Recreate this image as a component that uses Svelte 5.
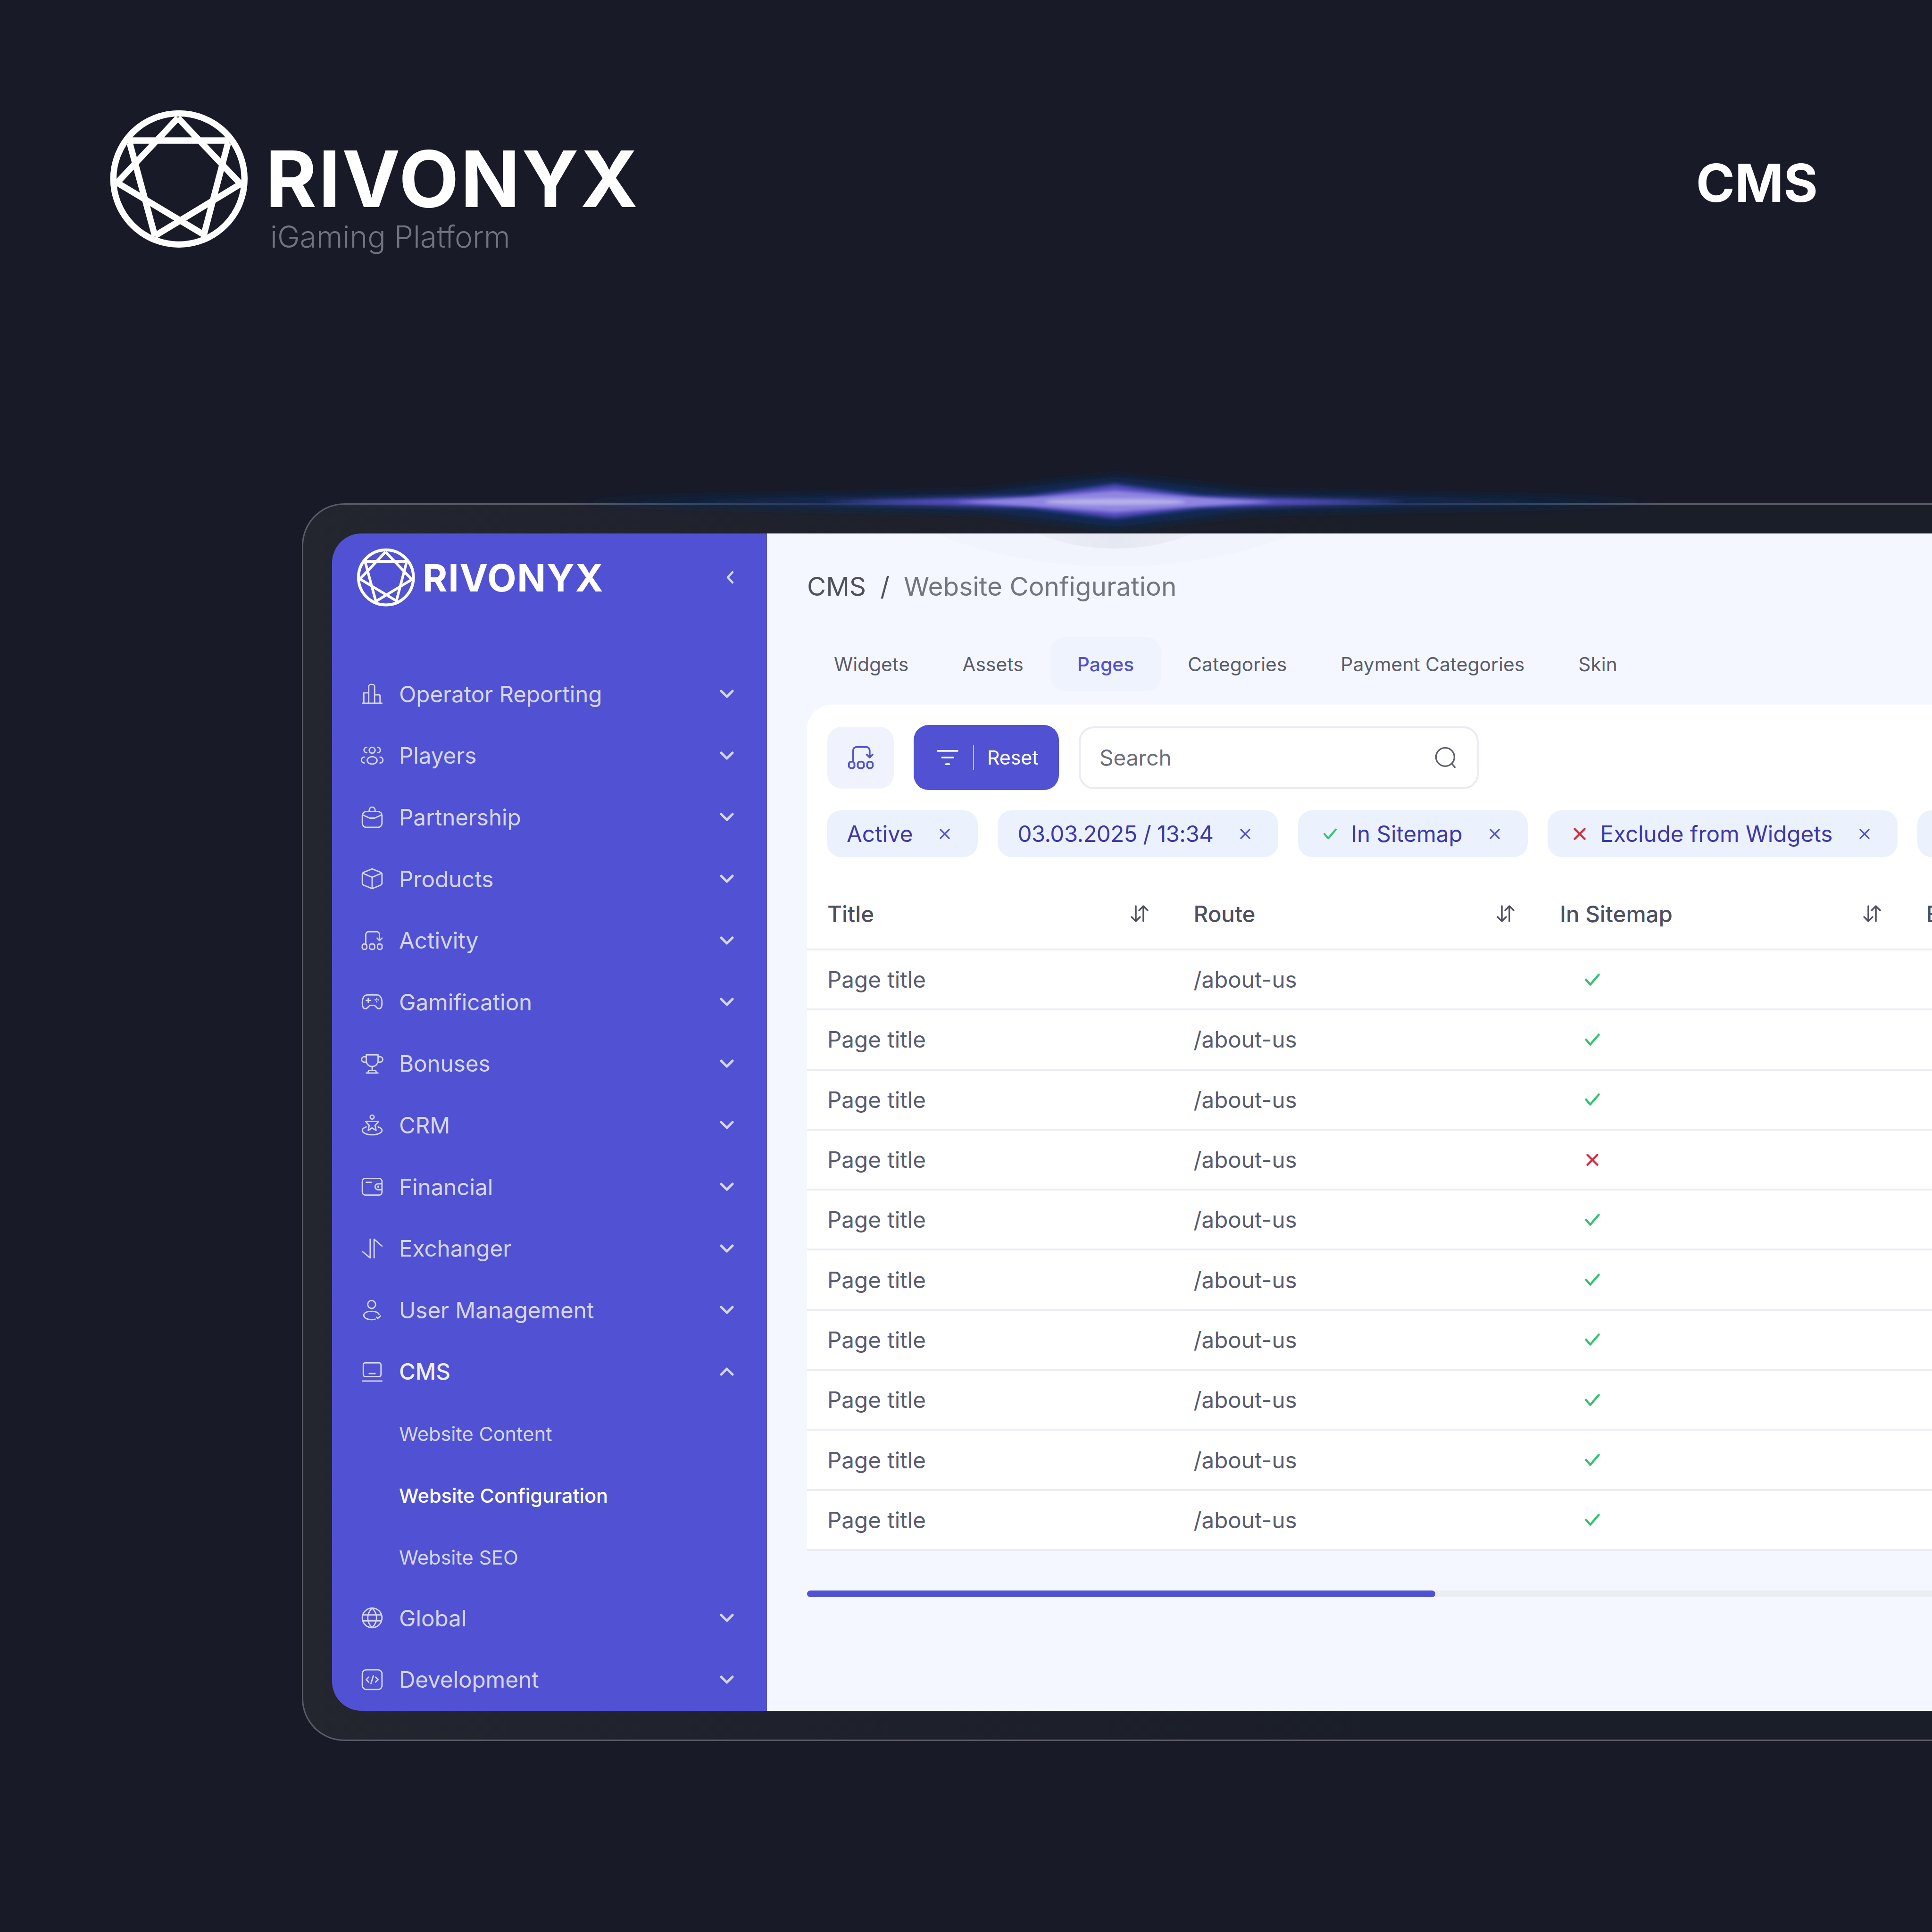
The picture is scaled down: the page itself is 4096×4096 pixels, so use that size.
<script>
  const gem = "M532 150 L145 562 L700 895 M532 150 L930 570 L385 900 M215 294 H860 M225 310 L385 900 M850 310 L695 900";

  const icons = {
    chart: "M2 21.5H22M3.5 21.5V11h5v10.5M8.5 21.5V4.5a2 2 0 0 1 2-2h2a2 2 0 0 1 2 2v17M14.5 13h4.5a1 1 0 0 1 1 1v7.5",
    players: "M12 3.5a3 3 0 1 1 0 6a3 3 0 1 1 0-6zM12 13a5 3.8 0 1 1 0 7.6a5 3.8 0 1 1 0-7.6zM6.5 3.5a2.8 2.8 0 0 0 0 5.6M17.5 3.5a2.8 2.8 0 0 1 0 5.6M4 13.5a3 3 0 0 0 0 6M20 13.5a3 3 0 0 1 0 6",
    bag: "M6 6.5h12a4 4 0 0 1 4 4v8a4 4 0 0 1-4 4H6a4 4 0 0 1-4-4v-8a4 4 0 0 1 4-4zM9 6.5V5a3 3 0 0 1 6 0v1.5M2.5 10l7 3.2h5l7-3.2",
    cube: "M12 2l8.5 3.4q1.5.6 1.5 2v9.2q0 1.4-1.500 2L12 22l-8.500-3.400q-1.500-.6-1.500-2V7.400q0-1.400 1.500-2zM2.500 6.500L12 10.500l9.500-4M12 10.500V22",
    activity: "M5.500 15V6a3 3 0 0 1 3-3h8a3 3 0 0 1 3 3v6M17 9.500l2.500 2.500 2.500-2.500M3.500 15.500h1a2 2 0 0 1 2 2.700a2 2 0 0 1-2 2.800h-1a2 2 0 0 1-1.500-2.800a2 2 0 0 1 1.500-2.700zM11.500 15.500h1a2 2 0 0 1 2 2.700a2 2 0 0 1-2 2.800h-1a2 2 0 0 1-2-2.800a2 2 0 0 1 2-2.700zM19.500 15.500h1a2 2 0 0 1 1.500 2.700a2 2 0 0 1-1.500 2.800h-1a2 2 0 0 1-2-2.800a2 2 0 0 1 2-2.700z",
    game: "M7 5h10c3 0 5 3 5 8 0 4-1 6-3 6-3 0-3-3.500-5.500-3.500h-3C8 15.500 8 19 5 19c-2 0-3-2-3-6 0-5 2-8 5-8zM6 10.500h4M8 8.500v4M15 10h.5M18 10h.5M16.500 8.500V9M16.500 11.500v.5",
    trophy: "M6 3h12v6a6 6 0 0 1-12 0zM6 5H4a2.200 2.200 0 0 0 0 5.500h2.500M18 5h2a2.200 2.200 0 0 1 0 5.500h-2.500M12 15v4M8.500 19h7l1 2.500h-9zM6 21.500h12",
    crm: "M12 2a2 2 0 1 1 0 4a2 2 0 1 1 0-4zM5.500 8.500h13l-3.500 4 1 5-4-2.500-4 2.500 1-5zM6 14c-2.500.8-4 2-4 3.500C2 20 6.500 22 12 22s10-2 10-4.500c0-1.500-1.500-2.700-4-3.500",
    wallet: "M5 3.500h14a3 3 0 0 1 3 3v11a3 3 0 0 1-3 3H5a3 3 0 0 1-3-3v-11a3 3 0 0 1 3-3zM6 7.500h5M22 9h-4a3 3 0 0 0 0 6h4M18 11.500h.5v1H18z",
    swap: "M10 2.500V21.500L2 15M14 21.500V2.500L22 9.500",
    user: "M11.500 2.500a4 4 0 1 1 0 8a4 4 0 1 1 0-8zM15 21.500c-1 .3-2.200.5-3.500.5C7 22 3.500 20.200 3.500 17.500S7 13.500 11.500 13.500c3.500 0 6.500 1.200 7.500 3M16.500 19.500l1.200 1.200 2.800-2.500",
    laptop: "M5 3h14a2 2 0 0 1 2 2v10a2 2 0 0 1-2 2H5a2 2 0 0 1-2-2V5a2 2 0 0 1 2-2zM2 21.500H22M9 14h6",
    globe: "M12 2a10 10 0 1 1 0 20a10 10 0 1 1 0-20zM12 2c-6 6-6 14 0 20M12 2c6 6 6 14 0 20M2.500 9h19M2.500 15h19",
    code: "M6 2h12a4 4 0 0 1 4 4v12a4 4 0 0 1-4 4H6a4 4 0 0 1-4-4V6a4 4 0 0 1 4-4zM8.500 9.500L6 12l2.500 2.500M15.500 9.500L18 12l-2.500 2.500M13.200 8l-2.400 8"
  };

  const menu = [
    { name: "Operator Reporting", icon: "chart" },
    { name: "Players", icon: "players" },
    { name: "Partnership", icon: "bag" },
    { name: "Products", icon: "cube" },
    { name: "Activity", icon: "activity" },
    { name: "Gamification", icon: "game" },
    { name: "Bonuses", icon: "trophy" },
    { name: "CRM", icon: "crm" },
    { name: "Financial", icon: "wallet" },
    { name: "Exchanger", icon: "swap" },
    { name: "User Management", icon: "user" },
    { name: "CMS", icon: "laptop", open: true, subs: ["Website Content", "Website Configuration", "Website SEO"] },
    { name: "Global", icon: "globe" },
    { name: "Development", icon: "code" }
  ];

  const tabs = ["Widgets", "Assets", "Pages", "Categories", "Payment Categories", "Skin"];
  const columns = ["Title", "Route", "In Sitemap", "Exclude from Widgets"];
  const sitemap = [true, true, true, false, true, true, true, true, true, true];
</script>

<div class="page">
  <header class="top">
    <div class="brand">
      <svg class="gem" viewBox="0 0 1080 1080" fill="none" stroke="#fff">
        <circle cx="538" cy="538" r="417" stroke-width="40" />
        <path d={gem} stroke-width="40" />
      </svg>
      <div class="brand-text">
        <div class="wordmark">RIVONYX</div>
        <div class="tagline">iGaming Platform</div>
      </div>
    </div>
    <div class="section-name">CMS</div>
  </header>

  <section class="frame">
    <svg class="glow" viewBox="0 0 2600 160" fill="none">
      <defs>
        <filter id="b1" x="-20%" y="-100%" width="140%" height="300%"><feGaussianBlur stdDeviation="10" /></filter>
        <filter id="b2" x="-20%" y="-100%" width="140%" height="300%"><feGaussianBlur stdDeviation="5" /></filter>
        <filter id="b3" x="-20%" y="-100%" width="140%" height="300%"><feGaussianBlur stdDeviation="3" /></filter>
      </defs>
      <polygon points="145,80 1000,62 1300,27 1600,62 2455,80 1600,98 1300,133 1000,98" fill="#10295a" filter="url(#b1)" />
      <polygon points="680,80 1120,68 1300,43 1480,68 1920,80 1480,92 1300,114 1120,92" fill="#5a4fc4" filter="url(#b2)" />
      <polygon points="960,80 1150,69 1300,56 1450,69 1640,80 1450,91 1300,102 1150,91" fill="#8f85e0" filter="url(#b3)" />
      <ellipse cx="1300" cy="80" rx="150" ry="7" fill="#b5b0ea" filter="url(#b3)" />
    </svg>

    <div class="app">
      <aside class="side">
        <div class="side-head">
          <svg class="side-gem" viewBox="0 0 1080 1080" fill="none" stroke="#fff">
            <circle cx="538" cy="538" r="417" stroke-width="44" />
            <path d={gem} stroke-width="40" />
          </svg>
          <span class="side-word">RIVONYX</span>
          <svg class="collapse" viewBox="0 0 20 30" fill="none" stroke="#d9d9ee" stroke-width="4.500" stroke-linecap="round" stroke-linejoin="round"><path d="M15 4L5 15l10 11" /></svg>
        </div>
        <nav class="nav">
          {#each menu as item}
            <div class="item" class:open={item.open}>
              <svg class="ico" viewBox="0 0 24 24" fill="none" stroke="currentColor" stroke-width="1.350" stroke-linecap="round" stroke-linejoin="round"><path d={icons[item.icon]} /></svg>
              <span class="label">{item.name}</span>
              <svg class="chev" viewBox="0 0 30 20" fill="none" stroke="currentColor" stroke-width="5" stroke-linecap="round" stroke-linejoin="round">
                <path d={item.open ? "M3 16L15 4l12 12" : "M3 4l12 12L27 4"} />
              </svg>
            </div>
            {#if item.subs}
              {#each item.subs as sub}
                <div class="sub" class:current={sub === "Website Configuration"}>{sub}</div>
              {/each}
            {/if}
          {/each}
        </nav>
      </aside>

      <main class="main">
        <div class="halo outer"></div>
        <div class="halo inner"></div>

        <div class="crumbs"><span class="crumb-root">CMS</span><span class="crumb-sep">/</span><span class="crumb-leaf">Website Configuration</span></div>

        <div class="tabs">
          {#each tabs as tab}
            <div class="tab" class:active={tab === "Pages"}>{tab}</div>
          {/each}
        </div>

        <div class="card">
          <div class="toolbar">
            <button class="square">
              <svg viewBox="0 0 24 24" fill="none" stroke="#5052d3" stroke-width="1.500" stroke-linecap="round" stroke-linejoin="round"><path d={icons.activity} /></svg>
            </button>
            <button class="reset">
              <svg viewBox="0 0 24 24" fill="none" stroke="#fff" stroke-width="1.600" stroke-linecap="round"><path d="M3 6h18M7 12h10M10.500 18h3" /></svg>
              <span class="reset-text">Reset</span>
            </button>
            <div class="search">
              <span>Search</span>
              <svg viewBox="0 0 24 24" fill="none" stroke="#5b5d6b" stroke-width="1.500" stroke-linecap="round"><path d="M11.500 2.500a9 9 0 1 1 0 18a9 9 0 1 1 0-18zM18 18l3 3.500" /></svg>
            </div>
          </div>

          <div class="chips">
            <div class="chip">Active<svg class="x" viewBox="0 0 20 20"><path d="M3 3l14 14M17 3L3 17" /></svg></div>
            <div class="chip date">03.03.2025 / 13:34<svg class="x" viewBox="0 0 20 20"><path d="M3 3l14 14M17 3L3 17" /></svg></div>
            <div class="chip lead"><svg class="mark ok" viewBox="0 0 24 20"><path d="M3 10l6 7L21 3" /></svg>In Sitemap<svg class="x" viewBox="0 0 20 20"><path d="M3 3l14 14M17 3L3 17" /></svg></div>
            <div class="chip lead"><svg class="mark no" viewBox="0 0 20 20"><path d="M3 3l14 14M17 3L3 17" /></svg>Exclude from Widgets<svg class="x" viewBox="0 0 20 20"><path d="M3 3l14 14M17 3L3 17" /></svg></div>
            <div class="chip"></div>
          </div>

          <div class="thead">
            {#each columns as col}
              <div class="th">
                <span>{col}</span>
                <svg class="sort" viewBox="0 0 44 40" fill="none" stroke="#4e5060" stroke-width="3.500" stroke-linecap="round" stroke-linejoin="round"><path d="M14 4V36M5 27L14 36L23 27M30 36V4M21 13L30 4L39 13" /></svg>
              </div>
            {/each}
          </div>

          {#each sitemap as yes}
            <div class="tr">
              <div class="td">Page title</div>
              <div class="td">/about-us</div>
              <div class="td">
                {#if yes}
                  <svg class="state ok" viewBox="0 0 24 20"><path d="M3 10l6 7L21 3" /></svg>
                {:else}
                  <svg class="state no" viewBox="0 0 20 20"><path d="M3 3l14 14M17 3L3 17" /></svg>
                {/if}
              </div>
              <div class="td"></div>
            </div>
          {/each}
        </div>

        <div class="scroll"><div class="thumb"></div></div>
      </main>
    </div>
  </section>
</div>

<style>
  :global(body) { margin: 0; background: #181b27; }
  .page { width: 4096px; height: 4096px; overflow: hidden; background: #181b27; font-family: Inter, "Liberation Sans", sans-serif; }

  .top { display: flex; justify-content: space-between; align-items: flex-start; padding: 200px 242px 0 200px; height: 1067px; box-sizing: border-box; }
  .brand { display: flex; align-items: flex-start; }
  .gem { width: 360px; height: 360px; flex: none; }
  .brand-text { margin-left: 3px; }
  .wordmark { color: #fff; font-size: 165px; font-weight: 700; line-height: 160px; letter-spacing: 3.800px; margin-top: 99px; }
  .tagline { color: #71737f; font-size: 64px; font-weight: 300; line-height: 80px; margin: 3px 0 0 10px; }
  .section-name { color: #fff; font-size: 111px; font-weight: 700; line-height: 148px; margin-top: 114px; }

  .frame { position: relative; margin-left: 640px; width: 3800px; height: 2624px; box-sizing: border-box; padding: 61px; border: 3px solid #5a5c66; border-right: 0; border-radius: 90px 0 0 90px; background: linear-gradient(90deg, #23252f, #1a1e29 60%); }
  .glow { position: absolute; left: 421px; top: -86px; width: 2600px; height: 160px; overflow: visible; pointer-events: none; }

  .app { display: flex; height: 2496px; width: 3700px; }
  .side { width: 922px; flex: none; background: #5052d3; border-radius: 62px 0 0 62px; box-sizing: border-box; padding: 32px 0 0 39px; }
  .side-head { display: flex; align-items: center; height: 122px; }
  .side-gem { width: 151px; height: 151px; flex: none; margin-right: 2px; }
  .side-word { color: #fff; font-size: 80px; font-weight: 700; letter-spacing: 1.800px; }
  .collapse { width: 20px; height: 30px; margin-left: auto; margin-right: 68px; }
  .nav { margin-top: 121px; }
  .item { display: flex; align-items: center; height: 130.600px; color: #d6d6ea; font-size: 47.500px; }
  .item.open { color: #f0f0f8; font-weight: 500; }
  .ico { width: 50px; height: 50px; flex: none; margin-left: 21px; color: #d6d6ea; }
  .label { margin-left: 32px; }
  .chev { width: 30px; height: 20px; margin-left: auto; margin-right: 70px; color: #d6d6ea; }
  .sub { height: 130.600px; box-sizing: border-box; padding: 4px 0 0 103px; display: flex; align-items: center; color: #d6d6ea; font-size: 41.500px; }
  .sub.current { color: #fff; font-weight: 500; }

  .main { position: relative; flex: 1; background: #f4f7ff; padding: 0 0 0 85px; overflow: hidden; }
  .halo { position: absolute; border-radius: 50%; }
  .halo.outer { left: 148px; top: -520px; width: 1180px; height: 590px; background: #f2f4fd; }
  .halo.inner { left: 479px; top: -250px; width: 518px; height: 282px; background: radial-gradient(ellipse at 50% 92%, #e6e8f1, #eef1f8 60%); }

  .crumbs { position: relative; display: flex; align-items: center; height: 80px; margin-top: 72px; font-size: 55px; font-weight: 400; }
  .crumb-root { color: #4f5160; }
  .crumb-sep { color: #4f5160; margin: 0 30px; }
  .crumb-leaf { color: #73757f; }

  .tabs { position: relative; display: flex; margin-top: 68px; }
  .tab { height: 114px; display: flex; align-items: center; padding: 0 57px; border-radius: 30px; color: #5b5d6b; font-size: 40.800px; }
  .tab.active { background: #eff3fd; color: #5052d3; font-weight: 500; }

  .card { position: relative; width: 3500px; margin-top: 29px; background: #fff; border-radius: 52px 0 0 0; }
  .toolbar { display: flex; align-items: center; gap: 42px; padding: 42px 43px 0; height: 182px; box-sizing: border-box; }
  .square { width: 141px; height: 131px; padding: 0; border: 0; border-radius: 30px; background: #f0f3fd; display: flex; align-items: center; justify-content: center; }
  .square svg { width: 60px; height: 60px; }
  .reset { width: 308px; height: 138px; padding: 0 0 0 44px; border: 0; border-radius: 32px; background: #5052d3; display: flex; align-items: center; color: #fff; font: 41px Inter, sans-serif; box-sizing: border-box; }
  .reset svg { width: 56px; height: 56px; flex: none; }
  .reset-text { margin-left: 26px; padding-left: 28px; border-left: 2px solid rgba(255,255,255,.6); line-height: 52px; }
  .search { width: 848px; height: 133px; box-sizing: border-box; display: flex; align-items: center; justify-content: space-between; padding: 0 40px 0 40px; border: 4px solid #ebecf2; border-radius: 32px; color: #6c6e7a; font-size: 46px; }
  .search svg { width: 52px; height: 52px; }

  .chips { display: flex; gap: 42px; padding: 42px 0 0 42px; }
  .chip { height: 99px; min-width: 100px; flex: none; display: flex; align-items: center; padding: 0 57px 0 42px; border-radius: 30px; background: #ebf2fe; color: #3f37a8; font-size: 47.500px; white-space: nowrap; }
  .chip.date { letter-spacing: -0.600px; }
  .chip.lead { padding-left: 52px; }
  .x { width: 26px; height: 26px; margin-left: 55px; fill: none; stroke: #5052d3; stroke-width: 2.500; stroke-linecap: round; }
  .mark { width: 32px; height: 30px; margin-right: 28px; fill: none; stroke-width: 3; stroke-linecap: round; stroke-linejoin: round; }
  .ok { stroke: #35c26f; }
  .no { stroke: #cf2f3f; }

  .thead, .tr { display: grid; grid-template-columns: repeat(4, 776.500px); }
  .thead { height: 198px; align-items: center; border-bottom: 4px solid #ecedf3; box-sizing: border-box; padding-top: 46px; }
  .th { display: flex; align-items: center; justify-content: space-between; padding: 0 50px 0 43px; color: #4e5060; font-size: 47.500px; font-weight: 500; }
  .sort { width: 44px; height: 40px; }
  .tr { height: 127.300px; align-items: center; border-bottom: 4px solid #ecedf3; box-sizing: border-box; }
  .td { padding: 0 43px; color: #5a5c6e; font-size: 47.500px; }
  .state { display: block; width: 38px; height: 30px; margin-left: 50px; fill: none; stroke-width: 3; stroke-linecap: round; stroke-linejoin: round; }

  .scroll { position: relative; width: 3500px; height: 14px; margin-top: 84px; border-radius: 7px; background: #ecedf3; }
  .thumb { width: 1332px; height: 14px; border-radius: 7px; background: #5052d3; }
</style>
